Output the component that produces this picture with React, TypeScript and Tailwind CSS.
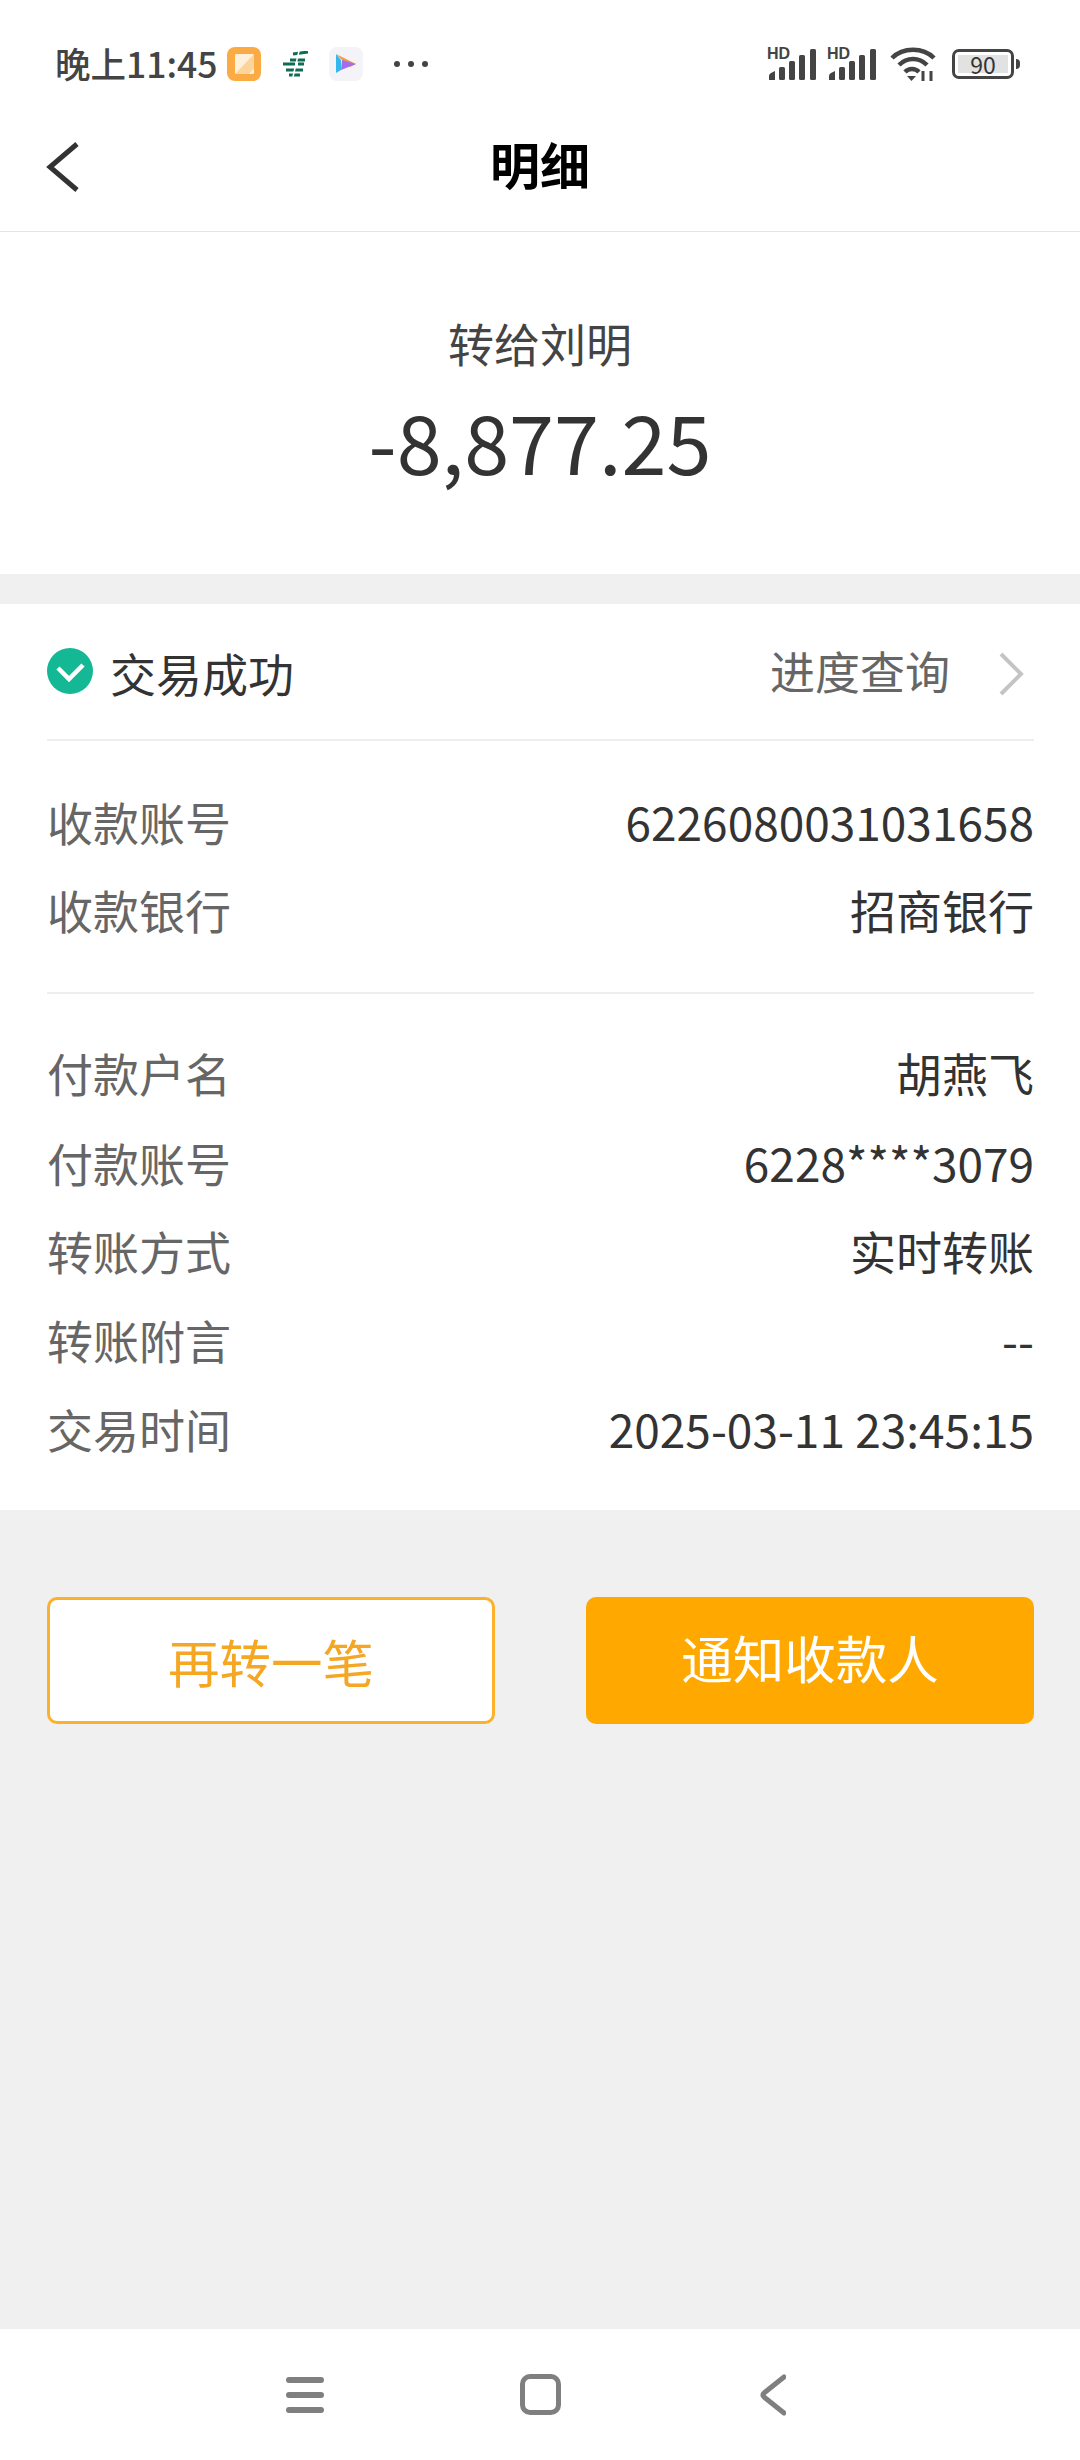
const RECEIVER_ROWS = [
  { label: '收款账号', value: '6226080031031658', h: 'h-[88px]' },
  { label: '收款银行', value: '招商银行', h: 'h-[88px]' },
]

const PAYER_ROWS = [
  { label: '付款户名', value: '胡燕飞', h: 'h-[90px]' },
  { label: '付款账号', value: '6228****3079', h: 'h-[89px]' },
  { label: '转账方式', value: '实时转账', h: 'h-[88px]' },
  { label: '转账附言', value: '--', h: 'h-[89px]' },
  { label: '交易时间', value: '2025-03-11 23:45:15', h: 'h-[90px]' },
]

function Signal () {
  return (
    <div className="relative h-[32px] w-[50px]">
      <span className="absolute left-0 top-[-2px] font-['Liberation_Sans'] text-[16px] leading-[16px] font-bold text-[#444]">HD</span>
      <svg width="50" height="32" viewBox="0 0 50 32" className="absolute left-0 top-0">
        <path d="M2 32v-4q0-2 2-3l4-2v9z" fill="#444" />
        <rect x="12" y="19" width="6" height="13" rx="1.500" fill="#444" />
        <rect x="22" y="13" width="6" height="19" rx="1.500" fill="#444" />
        <rect x="32" y="7" width="6" height="25" rx="1.500" fill="#444" />
        <rect x="43" y="1" width="6" height="31" rx="1.500" fill="#444" />
      </svg>
    </div>
  )
}

function StatusBar () {
  return (
    <div className="flex h-[115px] items-start justify-between pt-[47px] pl-[55px] pr-[60px]">
      <div className="flex h-[34px] items-center">
        <span className="-mt-[2px] text-[35.500px] leading-[34px] font-medium text-[#444]">晚上11:45</span>
        <svg width="34" height="34" viewBox="0 0 34 34" className="ml-[9px]">
          <rect width="34" height="34" rx="8" fill="#fbab44" />
          <rect x="8" y="7" width="19" height="20" rx="1" fill="#fff0dc" />
          <path d="M8 27 27 7v14l-5 6z" fill="#fcd49c" />
        </svg>
        <svg width="26" height="26" viewBox="0 0 26 26" className="ml-[21px]" fill="none" stroke="#0f6b52" strokeWidth="3">
          <path d="M11 3 26 1M8 9h15M1 13h12M16 13h6M4 19h17M7 24h11" />
          <path d="M17 0 11 26" stroke="#fff" strokeWidth="1.500" />
        </svg>
        <div className="ml-[21px] flex h-[34px] w-[34px] items-center justify-center rounded-[8px] bg-[#f4f4f8]">
          <svg width="22" height="24" viewBox="0 0 22 24">
            <path d="M1 2 21 12 15 15 7 8z" fill="#f59a3c" />
            <path d="M1 2v19l5-3V8z" fill="#35b6ee" />
            <path d="M6 18 21 12 7 8z" fill="#a36cf0" />
          </svg>
        </div>
        <div className="ml-[31px] flex gap-[8px]">
          <span className="h-[6px] w-[6px] rounded-full bg-[#444]" />
          <span className="h-[6px] w-[6px] rounded-full bg-[#444]" />
          <span className="h-[6px] w-[6px] rounded-full bg-[#444]" />
        </div>
      </div>
      <div className="flex items-center">
        <Signal />
        <div className="ml-[10px]">
          <Signal />
        </div>
        <svg width="46" height="34" viewBox="0 0 46 34" fill="none" stroke="#444" strokeWidth="4.500" className="ml-[13px]">
          <path d="M2 11C13 0 33 0 44 11" />
          <path d="M9 18C17 10 29 10 37 18" />
          <path d="M15 25c4-4 10-4 14 0" />
          <path d="M17 29h9l-4.500 5z" fill="#444" stroke="none" />
          <path d="M33 24v10M41 24v10" strokeWidth="3" />
        </svg>
        <div className="ml-[16px] flex items-center">
          <div className="flex h-[30px] w-[62px] items-center justify-center rounded-[7px] border-[3px] border-[#444] px-[3px]">
            <span className="flex h-[18px] w-full items-center justify-center bg-[#e2e2e2] text-[23px] leading-none text-[#333]">90</span>
          </div>
          <span className="ml-[2px] h-[10px] w-[4px] rounded-r-full bg-[#444]" />
        </div>
      </div>
    </div>
  )
}

function InfoRow ({ label, value, h }: { label: string; value: string; h: string }) {
  return (
    <div className={`flex items-center justify-between ${h}`}>
      <span className="text-[46px] leading-none text-[#666]">{label}</span>
      <span className="text-[46px] leading-none text-[#333]">{value}</span>
    </div>
  )
}

export default function App () {
  return (
    <div className="flex h-[2460px] w-[1080px] flex-col bg-[#f0f0f0] font-['Noto_Sans_CJK_SC',sans-serif]">
      <div className="bg-white">
        <StatusBar />
        {/* Nav bar */}
        <div className="relative flex h-[116px] items-start justify-center">
          <svg width="34" height="50" viewBox="0 0 34 50" fill="none" stroke="#333" strokeWidth="5" className="absolute left-[46px] top-[27px]">
            <path d="M31 2 4 25l27 23" />
          </svg>
          <span className="mt-[23px] text-[50px] leading-none font-bold text-black">明细</span>
        </div>
      </div>
      <div className="h-[1px] bg-[#e4e4e4]" />

      {/* Amount */}
      <div className="flex h-[342px] flex-col items-center bg-white pt-[83px]">
        <span className="text-[46px] leading-[54px] text-[#444]">转给刘明</span>
        <span className="mt-[23px] text-[81px] leading-[96px] text-[#333]">-8,877.25</span>
      </div>

      <div className="mt-[30px] bg-white pl-[47px] pr-[46px]">
        <div className="flex h-[137px] items-center justify-between border-b-2 border-[#eeeeee]">
          <div className="flex items-center">
            <svg width="46" height="46" viewBox="0 0 46 46" className="-mt-[2px]">
              <circle cx="23" cy="23" r="23" fill="#14b894" />
              <path d="M11 20l11 11 14-14" fill="none" stroke="#fff" strokeWidth="4.500" />
            </svg>
            <span className="ml-[17px] text-[46px] leading-none text-[#333]">交易成功</span>
          </div>
          <div className="flex items-center">
            <span className="-mt-[3px] text-[45px] leading-none text-[#666]">进度查询</span>
            <svg width="26" height="44" viewBox="0 0 26 44" fill="none" stroke="#c4c4c4" strokeWidth="4" className="ml-[48px] mr-[10px] mt-[4px]">
              <path d="M3 2l20 20L3 42" />
            </svg>
          </div>
        </div>

        <div className="flex flex-col border-b-2 border-[#eeeeee] pt-[36px] pb-[39px]">
          {RECEIVER_ROWS.map(row => (
            <InfoRow key={row.label} {...row} />
          ))}
        </div>

        <div className="flex flex-col pt-[33px] pb-[37px]">
          {PAYER_ROWS.map(row => (
            <InfoRow key={row.label} {...row} />
          ))}
        </div>
      </div>

      {/* Actions */}
      <div className="mt-[87px] flex justify-between pl-[47px] pr-[46px]">
        <button className="h-[127px] w-[448px] rounded-[10px] border-[3px] border-[#fbb12a] bg-white text-[51.500px] text-[#f5a623]">
          再转一笔
        </button>
        <button className="h-[127px] w-[448px] rounded-[10px] bg-[#ffa900] pb-[8px] text-[51.500px] text-white">
          通知收款人
        </button>
      </div>

      {/* System nav */}
      <div className="mt-auto flex h-[131px] items-center justify-between bg-white pl-[286px] pr-[294px]">
        <div className="flex flex-col gap-[9px]">
          <span className="h-[6px] w-[38px] rounded-full bg-[#7f7f7f]" />
          <span className="h-[6px] w-[38px] rounded-full bg-[#7f7f7f]" />
          <span className="h-[6px] w-[38px] rounded-full bg-[#7f7f7f]" />
        </div>
        <div className="-ml-[4px] h-[41px] w-[41px] rounded-[10px] border-[5px] border-[#7f7f7f]" />
        <svg width="26" height="42" viewBox="0 0 26 42" fill="none" stroke="#7f7f7f" strokeWidth="5" strokeLinecap="round" strokeLinejoin="round">
          <path d="M24 3 4 19c-1.500 1-1.500 3 0 4l20 16" />
        </svg>
      </div>
    </div>
  )
}
